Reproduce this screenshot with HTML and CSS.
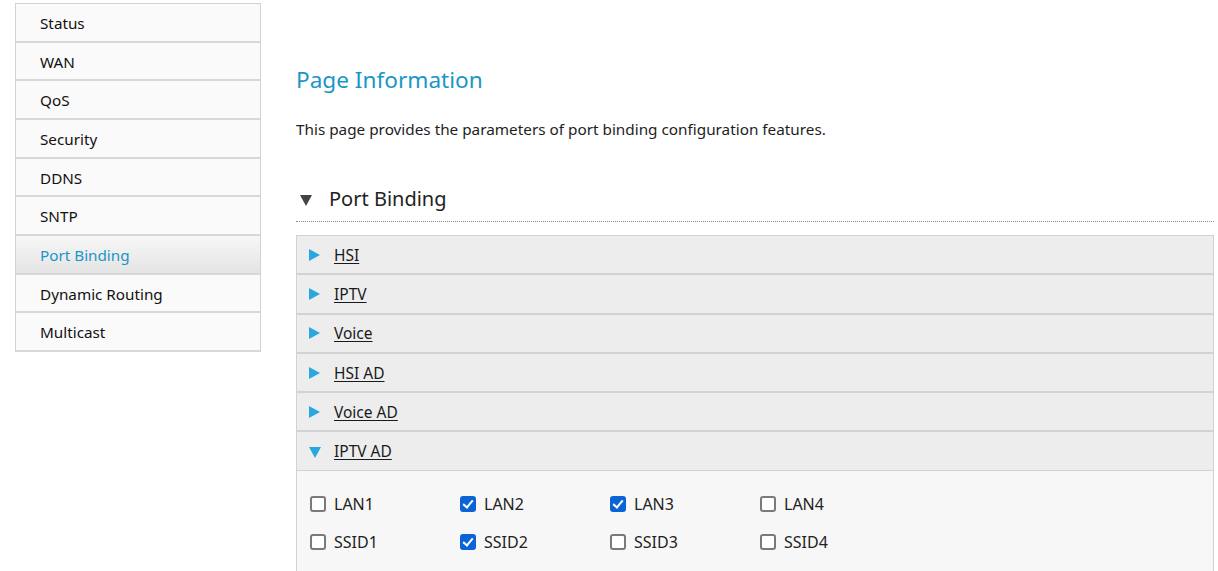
FILE: index.html
```html
<!DOCTYPE html>
<html>
<head>
<meta charset="utf-8">
<link rel="stylesheet" href="styles.css">
</head>
<body>
<div class="layout">
  <nav class="sidebar">
    <a class="nav-item">Status</a>
    <a class="nav-item">WAN</a>
    <a class="nav-item">QoS</a>
    <a class="nav-item">Security</a>
    <a class="nav-item">DDNS</a>
    <a class="nav-item">SNTP</a>
    <a class="nav-item active">Port Binding</a>
    <a class="nav-item">Dynamic Routing</a>
    <a class="nav-item">Multicast</a>
  </nav>
  <main class="content">
    <h1 class="page-title">Page Information</h1>
    <p class="page-desc">This page provides the parameters of port binding configuration features.</p>
    <div class="section-head">
      <span class="tri-down dark"></span>
      <span class="section-title">Port Binding</span>
    </div>
    <div class="accordion">
      <div class="acc-row"><span class="tri-right"></span><a class="acc-link">HSI</a></div>
      <div class="acc-row"><span class="tri-right"></span><a class="acc-link">IPTV</a></div>
      <div class="acc-row"><span class="tri-right"></span><a class="acc-link">Voice</a></div>
      <div class="acc-row"><span class="tri-right"></span><a class="acc-link">HSI AD</a></div>
      <div class="acc-row"><span class="tri-right"></span><a class="acc-link">Voice AD</a></div>
      <div class="acc-row open"><span class="tri-down blue"></span><a class="acc-link">IPTV AD</a></div>
      <div class="acc-body">
        <div class="check-grid">
          <label class="check"><span class="box"></span>LAN1</label>
          <label class="check"><span class="box on"></span>LAN2</label>
          <label class="check"><span class="box on"></span>LAN3</label>
          <label class="check"><span class="box"></span>LAN4</label>
          <label class="check"><span class="box"></span>SSID1</label>
          <label class="check"><span class="box on"></span>SSID2</label>
          <label class="check"><span class="box"></span>SSID3</label>
          <label class="check"><span class="box"></span>SSID4</label>
        </div>
      </div>
    </div>
  </main>
</div>
</body>
</html>
```
FILE: styles.css
```css
* { box-sizing: border-box; }
html, body { margin: 0; padding: 0; background: #fff; }
body {
  font-family: "Noto Sans", "Open Sans", "DejaVu Sans", sans-serif;
  color: #1a1a1a;
  overflow: hidden;
  height: 571px;
}
.layout {
  display: flex;
  padding: 3px 4px 0 15px;
  gap: 35px;
}
.sidebar {
  width: 246px;
  flex: none;
  border: 1px solid #d2d2d2;
  border-bottom: none;
  align-self: flex-start;
  display: flex;
  flex-direction: column;
}
.nav-item {
  display: block;
  height: 38.67px;
  line-height: 38px;
  padding-left: 24px;
  font-size: 15.25px;
  color: #111;
  background: #fafafa;
  border-bottom: 2px solid #d8d8d8;
}
.nav-item.active {
  color: #1a96c8;
  background: linear-gradient(#f7f7f7, #e4e4e4);
}
.content {
  flex: 1;
  min-width: 0;
}
.page-title {
  margin: 60px 0 0;
  font-weight: normal;
  font-size: 22.6px;
  line-height: 34px;
  color: #1a96c8;
}
.page-desc {
  margin: 22px 0 0;
  font-size: 15.3px;
  line-height: 20px;
  color: #1e1e1e;
}
.section-head {
  margin-top: 45px;
  height: 30px;
  display: flex;
  align-items: center;
  padding-left: 4px;
  border-bottom: 1px dotted #8a8a8a;
  padding-bottom: 7px;
  box-sizing: content-box;
}
.section-title {
  font-size: 20px;
  color: #222;
  margin-left: 17px;
  margin-bottom: 2px;
}
.tri-down {
  width: 0; height: 0;
  border-left: 6px solid transparent;
  border-right: 6px solid transparent;
  border-top: 11px solid #444;
  margin-top: 2px;
}
.tri-down.blue { border-top-color: #29a8e0; margin-left: 2px; margin-right: 2px; }
.tri-right {
  width: 0; height: 0;
  border-top: 6px solid transparent;
  border-bottom: 6px solid transparent;
  border-left: 11px solid #29a8e0;
  margin-left: 2px; margin-right: 3px;
}
.accordion {
  margin-top: 13px;
  border: 1px solid #d2d2d2;
  border-bottom: none;
}
.acc-row {
  height: 39.3px;
  display: flex;
  align-items: center;
  padding-left: 10px;
  background: #ededed;
  border-bottom: 2px solid #d2d2d2;
  gap: 11px;
}
.acc-row.open { border-bottom-width: 1px; height: 38.5px; }
.acc-link {
  font-size: 15.5px;
  color: #1a1a1a;
  text-decoration: underline;
  text-underline-offset: 2px;
}
.acc-body {
  background: #f7f7f7;
  padding: 22px 0 20px 13px;
}
.check-grid {
  display: grid;
  grid-template-columns: repeat(4, 150px);
  row-gap: 15px;
}
.check {
  display: flex;
  align-items: center;
  gap: 8px;
  font-size: 16px;
  color: #222;
  height: 23px;
}
.box {
  width: 16px; height: 16px;
  border: 2px solid #7a7a7a;
  border-radius: 3px;
  background: #fff;
  position: relative;
  flex: none;
}
.box.on {
  background: #0b63d6;
  border-color: #0b63d6;
}
.box.on::after {
  content: "";
  position: absolute;
  left: 3px; top: 0px;
  width: 4px; height: 8px;
  border: solid #fff;
  border-width: 0 2px 2px 0;
  transform: rotate(40deg);
}
```
